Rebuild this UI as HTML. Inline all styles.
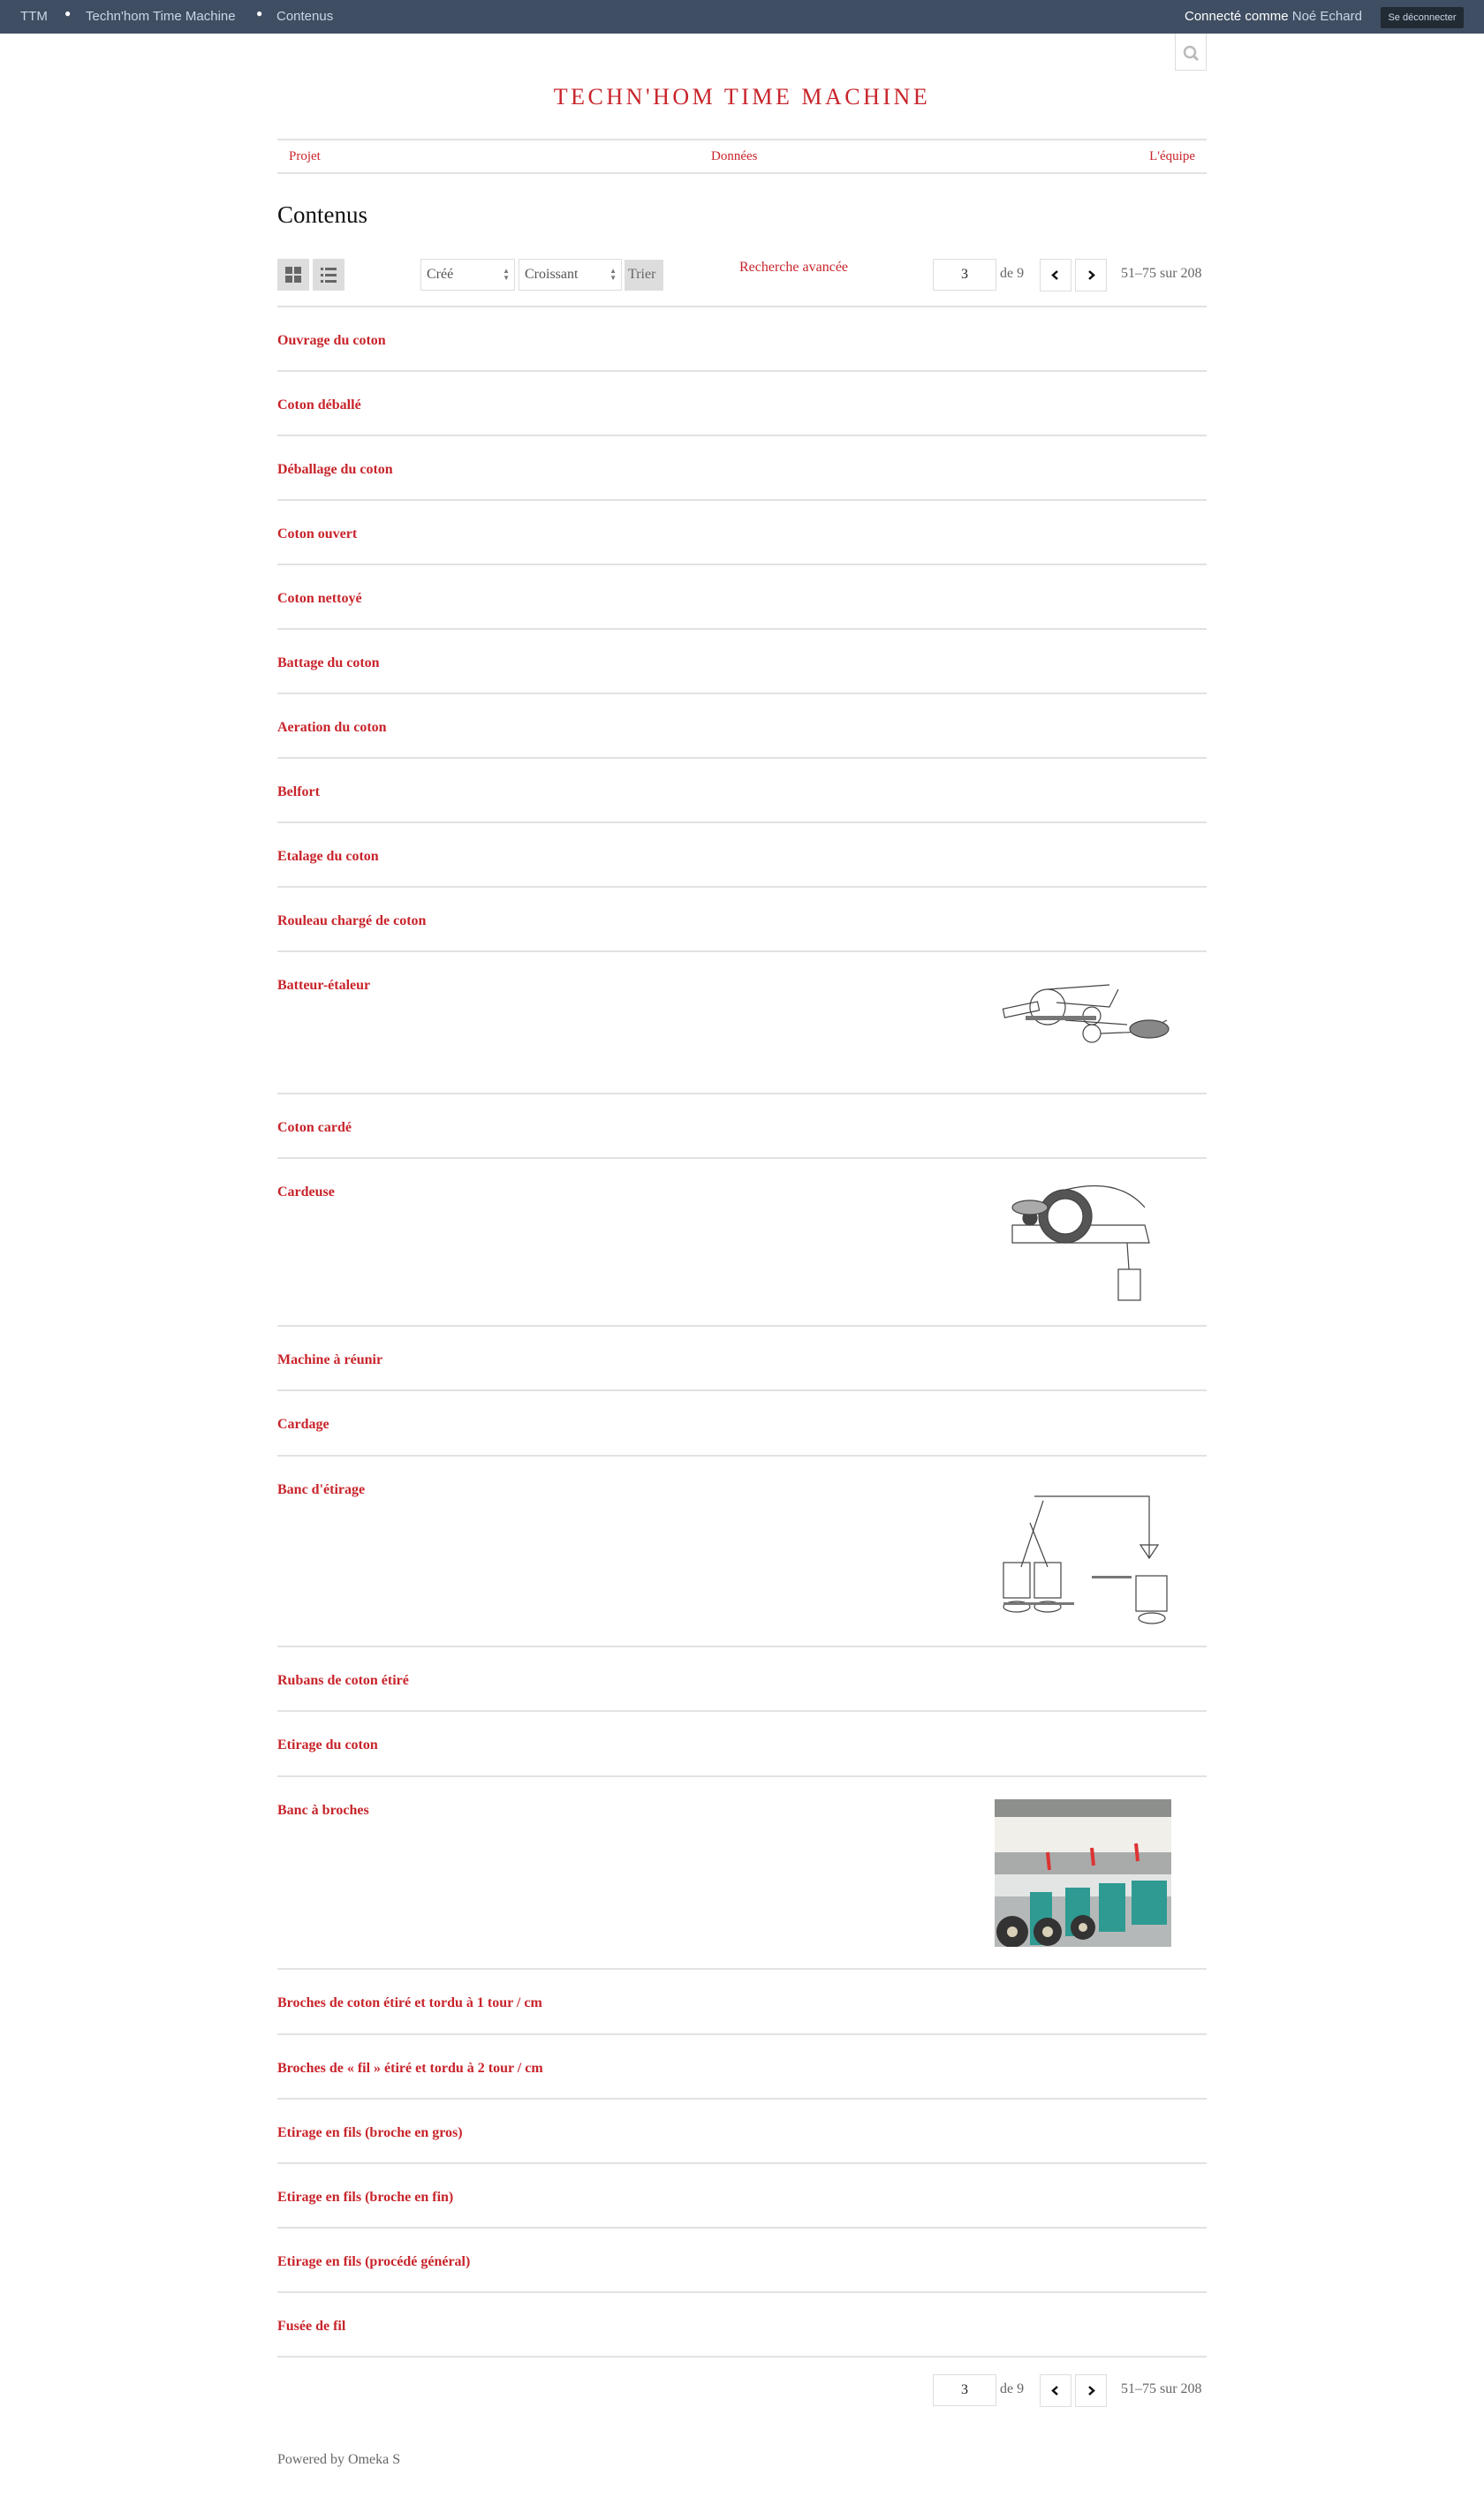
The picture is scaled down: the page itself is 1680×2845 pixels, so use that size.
<!DOCTYPE html>
<html><head><meta charset="utf-8"><style>
*{box-sizing:border-box;margin:0;padding:0}
body{width:1680px;height:2845px;background:#fff;font-family:"Liberation Serif",serif;color:#333;position:relative;overflow:hidden}
.a{position:absolute}
.nav{left:0;top:0;width:1680px;height:38px;background:#3f4e62;font-family:"Liberation Sans",sans-serif;font-size:15px;color:#c9d6ea}
.red{color:#c8242b}
.btn{border:1px solid #ddd;background:#fff}
.row{position:absolute;left:314px;width:1052px;border-bottom:2px solid #e2e2e2}
.row span{position:absolute;left:0;top:29px;font-weight:bold;font-size:16px;color:#c8242b}
.row svg{position:absolute;left:812px;top:25px}
</style></head><body>
<div class="a nav">
<span class="a" style="left:23px;top:10px">TTM</span>
<span class="a" style="left:73px;top:8px;color:#fff;font-size:12px">●</span>
<span class="a" style="left:97px;top:10px">Techn'hom Time Machine</span>
<span class="a" style="left:290px;top:8px;color:#fff;font-size:12px">●</span>
<span class="a" style="left:313px;top:10px">Contenus</span>
<span class="a" style="left:1341px;top:10px;color:#fff">Connecté comme <span style="color:#c9d6ea">Noé Echard</span></span>
<span class="a" style="left:1563px;top:8px;width:94px;height:24px;background:#222a33;border-radius:2px;font-size:11px;line-height:24px;text-align:center;color:#c9d6ea">Se déconnecter</span>
</div>
<div class="a btn" style="left:1330px;top:38px;width:36px;height:42px;border-top:none">
<svg width="36" height="42"><circle cx="16" cy="21" r="6" fill="none" stroke="#bbb" stroke-width="2.5"/><line x1="20" y1="25" x2="25" y2="30" stroke="#bbb" stroke-width="3"/></svg></div>
<div class="a red" style="left:314px;width:1052px;top:95px;text-align:center;font-size:26px;letter-spacing:3.5px">TECHN'HOM TIME MACHINE</div>
<div class="a" style="left:314px;top:157px;width:1052px;height:40px;border-top:2px solid #e2e2e2;border-bottom:2px solid #e2e2e2;font-size:15px">
<span class="a red" style="left:13px;top:10px">Projet</span>
<span class="a red" style="left:491px;top:10px">Données</span>
<span class="a red" style="right:13px;top:10px">L'équipe</span></div>
<div class="a" style="left:314px;top:228px;font-size:27px;color:#111">Contenus</div>
<div class="a" style="left:314px;top:293px;width:36px;height:36px;background:#ddd"><svg width="36" height="36"><rect x="9" y="9" width="8" height="8" fill="#666"/><rect x="19" y="9" width="8" height="8" fill="#666"/><rect x="9" y="19" width="8" height="8" fill="#666"/><rect x="19" y="19" width="8" height="8" fill="#666"/></svg></div>
<div class="a" style="left:354px;top:293px;width:36px;height:36px;background:#ddd"><svg width="36" height="36"><g fill="#666"><rect x="9" y="10" width="3" height="3"/><rect x="14" y="10" width="13" height="3"/><rect x="9" y="17" width="3" height="3"/><rect x="14" y="17" width="13" height="3"/><rect x="9" y="24" width="3" height="3"/><rect x="14" y="24" width="13" height="3"/></g></svg></div>
<div class="a btn" style="left:476px;top:293px;width:107px;height:36px;font-size:16px;color:#555;padding:8px 6px">Créé<span class="a" style="right:5px;top:9px;font-size:8px;line-height:8px;color:#777">▲<br>▼</span></div>
<div class="a btn" style="left:587px;top:293px;width:117px;height:36px;font-size:16px;color:#555;padding:8px 6px">Croissant<span class="a" style="right:5px;top:9px;font-size:8px;line-height:8px;color:#777">▲<br>▼</span></div>
<div class="a" style="left:707px;top:294px;width:44px;height:35px;background:#ddd;font-size:16px;color:#666;padding:8px 4px">Trier</div>
<div class="a red" style="left:837px;top:294px;font-size:16px">Recherche avancée</div>
<div class="a btn" style="left:1056px;top:293px;width:72px;height:36px;text-align:center;font-size:16px;color:#222;padding-top:8px">3</div>
<div class="a" style="left:1132px;top:301px;font-size:16px;color:#666">de 9</div>
<div class="a btn" style="left:1177px;top:293px;width:36px;height:37px"><svg width="34" height="35"><path d="M19 13 L14 17.5 L19 22" fill="none" stroke="#111" stroke-width="2.5"/></svg></div>
<div class="a btn" style="left:1217px;top:293px;width:36px;height:37px"><svg width="34" height="35"><path d="M15 13 L20 17.5 L15 22" fill="none" stroke="#111" stroke-width="2.5"/></svg></div>
<div class="a" style="left:1269px;top:301px;font-size:16px;color:#666">51–75 sur 208</div>
<div class="a" style="left:314px;top:346px;width:1052px;height:2px;background:#e2e2e2"></div>

<div class="row" style="top:348px;height:73px"><span>Ouvrage du coton</span></div>
<div class="row" style="top:421px;height:73px"><span>Coton déballé</span></div>
<div class="row" style="top:494px;height:73px"><span>Déballage du coton</span></div>
<div class="row" style="top:567px;height:73px"><span>Coton ouvert</span></div>
<div class="row" style="top:640px;height:73px"><span>Coton nettoyé</span></div>
<div class="row" style="top:713px;height:73px"><span>Battage du coton</span></div>
<div class="row" style="top:786px;height:73px"><span>Aeration du coton</span></div>
<div class="row" style="top:859px;height:73px"><span>Belfort</span></div>
<div class="row" style="top:932px;height:73px"><span>Etalage du coton</span></div>
<div class="row" style="top:1005px;height:73px"><span>Rouleau chargé de coton</span></div>
<div class="row" style="top:1078px;height:161px"><span>Batteur-étaleur</span>
<svg width="200" height="111" style="top:32px"><g fill="none" stroke="#444" stroke-width="1.2"><rect x="10" y="28" width="40" height="10" transform="rotate(-12 30 33)"/><circle cx="60" cy="30" r="20"/><path d="M60 10 L130 5 M70 25 L130 30 L140 10 M80 45 L150 50"/><circle cx="110" cy="40" r="10"/><circle cx="110" cy="60" r="10"/><path d="M120 60 L170 58 L195 45"/><ellipse cx="175" cy="55" rx="22" ry="10" fill="#888"/></g><rect x="35" y="40" width="80" height="5" fill="#777"/></svg></div>
<div class="row" style="top:1239px;height:73px"><span>Coton cardé</span></div>
<div class="row" style="top:1312px;height:190px"><span>Cardeuse</span>
<svg width="200" height="140"><g fill="none" stroke="#444" stroke-width="1.2"><path d="M20 50 L170 50 L175 70 L20 70 Z"/><circle cx="80" cy="40" r="30" fill="#555"/><circle cx="80" cy="40" r="20" fill="#fff"/><path d="M80 10 Q140 -5 170 30"/><circle cx="40" cy="42" r="8" fill="#444"/><ellipse cx="40" cy="30" rx="20" ry="8" fill="#aaa"/><rect x="140" y="100" width="25" height="35"/><path d="M150 70 L152 100"/></g></svg></div>
<div class="row" style="top:1502px;height:73px"><span>Machine à réunir</span></div>
<div class="row" style="top:1575px;height:74px"><span>Cardage</span></div>
<div class="row" style="top:1649px;height:216px"><span>Banc d'étirage</span>
<svg width="200" height="166"><g fill="none" stroke="#444" stroke-width="1.2"><path d="M45 20 L175 20 L175 90"/><path d="M30 100 L55 25 M60 100 L40 50"/><rect x="10" y="95" width="30" height="40"/><rect x="45" y="95" width="30" height="40"/><ellipse cx="25" cy="145" rx="15" ry="6"/><ellipse cx="60" cy="145" rx="15" ry="6"/><rect x="160" y="110" width="35" height="40"/><ellipse cx="178" cy="158" rx="15" ry="6"/><path d="M165 75 L185 75 L175 90 Z"/></g><g fill="#777"><rect x="10" y="140" width="80" height="3"/><rect x="110" y="110" width="45" height="3"/></g></svg></div>
<div class="row" style="top:1865px;height:73px"><span>Rubans de coton étiré</span></div>
<div class="row" style="top:1938px;height:74px"><span>Etirage du coton</span></div>
<div class="row" style="top:2012px;height:218px"><span>Banc à broches</span>
<svg width="200" height="167"><rect width="200" height="167" fill="#b5b8b8"/><rect y="0" width="200" height="20" fill="#8d8f8c"/><rect x="0" y="20" width="200" height="40" fill="#f0efe9"/><rect x="0" y="60" width="200" height="25" fill="#a9abab"/><rect x="0" y="85" width="200" height="25" fill="#e3e5e5"/><g fill="#2f9a92"><rect x="40" y="105" width="25" height="60"/><rect x="80" y="100" width="28" height="55"/><rect x="118" y="95" width="30" height="55"/><rect x="155" y="92" width="40" height="50"/></g><g fill="#333"><circle cx="20" cy="150" r="18"/><circle cx="60" cy="150" r="16"/><circle cx="100" cy="145" r="14"/></g><g fill="#d8d0b8"><circle cx="20" cy="150" r="6"/><circle cx="60" cy="150" r="6"/><circle cx="100" cy="145" r="5"/></g><g stroke="#d33" stroke-width="4"><line x1="60" y1="60" x2="62" y2="80"/><line x1="110" y1="55" x2="112" y2="75"/><line x1="160" y1="50" x2="162" y2="70"/></g></svg></div>
<div class="row" style="top:2230px;height:74px"><span>Broches de coton étiré et tordu à 1 tour / cm</span></div>
<div class="row" style="top:2304px;height:73px"><span>Broches de « fil » étiré et tordu à 2 tour / cm</span></div>
<div class="row" style="top:2377px;height:73px"><span>Etirage en fils (broche en gros)</span></div>
<div class="row" style="top:2450px;height:73px"><span>Etirage en fils (broche en fin)</span></div>
<div class="row" style="top:2523px;height:73px"><span>Etirage en fils (procédé général)</span></div>
<div class="row" style="top:2596px;height:73px"><span>Fusée de fil</span></div>

<div class="a btn" style="left:1056px;top:2688px;width:72px;height:36px;text-align:center;font-size:16px;color:#222;padding-top:8px">3</div>
<div class="a" style="left:1132px;top:2696px;font-size:16px;color:#666">de 9</div>
<div class="a btn" style="left:1177px;top:2688px;width:36px;height:37px"><svg width="34" height="35"><path d="M19 13 L14 17.5 L19 22" fill="none" stroke="#111" stroke-width="2.5"/></svg></div>
<div class="a btn" style="left:1217px;top:2688px;width:36px;height:37px"><svg width="34" height="35"><path d="M15 13 L20 17.5 L15 22" fill="none" stroke="#111" stroke-width="2.5"/></svg></div>
<div class="a" style="left:1269px;top:2696px;font-size:16px;color:#666">51–75 sur 208</div>
<div class="a" style="left:314px;top:2776px;font-size:16px;color:#666">Powered by Omeka S</div>
</body></html>
